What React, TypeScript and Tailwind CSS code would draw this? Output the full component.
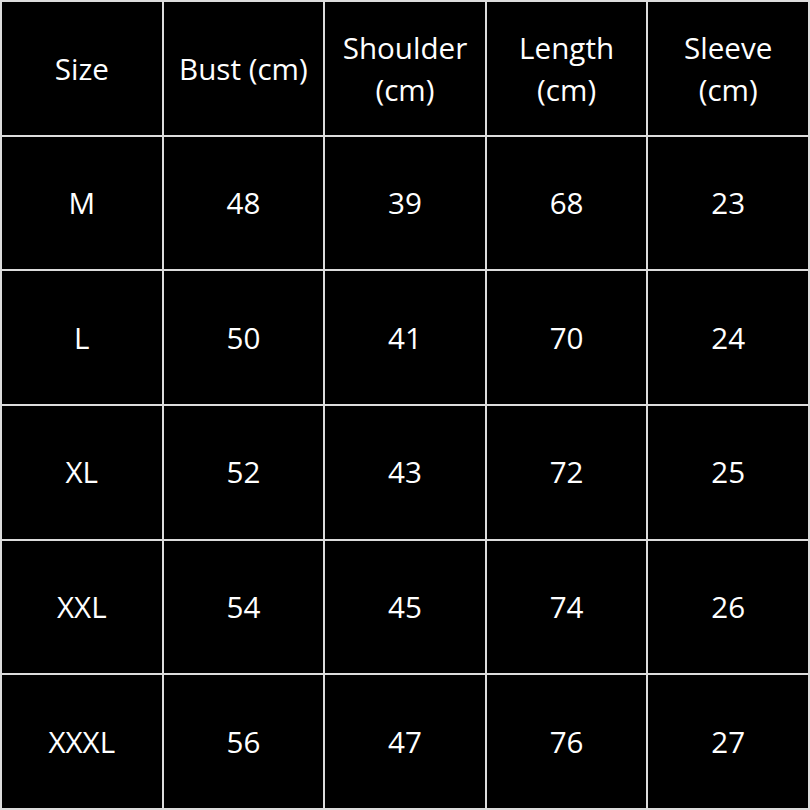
import React from "react";

const header = ["Size", "Bust (cm)", "Shoulder (cm)", "Length (cm)", "Sleeve (cm)"];
const rows = [
  ["M", "48", "39", "68", "23"],
  ["L", "50", "41", "70", "24"],
  ["XL", "52", "43", "72", "25"],
  ["XXL", "54", "45", "74", "26"],
  ["XXXL", "56", "47", "76", "27"],
];

export default function App() {
  return (
    <div
      className="w-[810px] h-[810px] bg-[#dcdcdc] p-[2px] grid grid-cols-5 grid-rows-6 gap-[2px] text-white text-[29.6px] leading-[42px]"
      style={{ fontFamily: '"Open Sans", sans-serif' }}
    >
      {header.map((h) => (
        <div key={h} className="bg-black flex items-center justify-center text-center px-2 pt-[2px]">
          {h}
        </div>
      ))}
      {rows.flat().map((c, i) => (
        <div key={i} className="bg-black flex items-center justify-center text-center">
          {c}
        </div>
      ))}
    </div>
  );
}
